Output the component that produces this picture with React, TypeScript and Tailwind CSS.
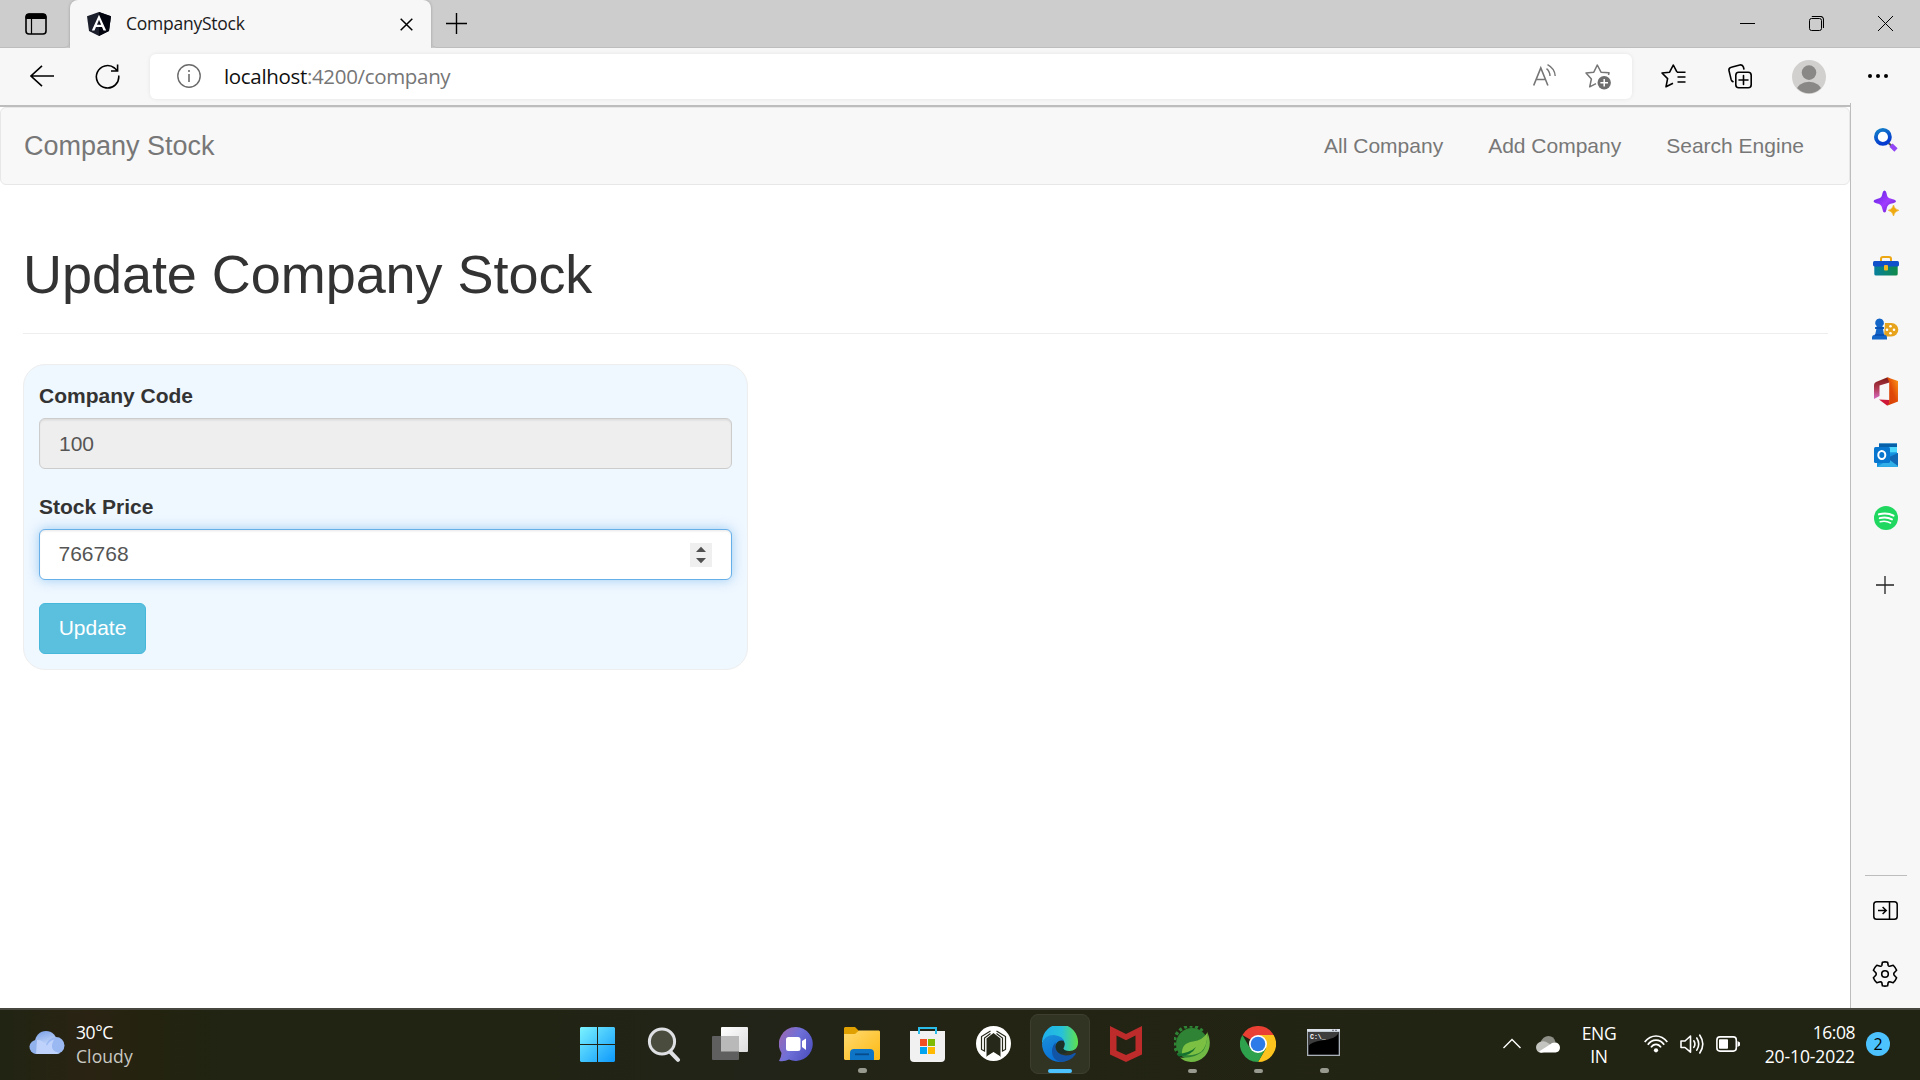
import type { ReactNode } from "react";

const SEGOE = "font-['Open_Sans','Noto_Sans',sans-serif]";

function AngularIcon() {
  return (
    <svg width="24" height="24" viewBox="0 0 24 24">
      <path d="M12 0L24 4.2L22 19L12 24L2 19L0 4.2Z" fill="#1b1f2b" />
      <path d="M12 0L24 4.2L22 19L12 24Z" fill="#04060f" />
      <path d="M12 2.8L4.8 18.6H7.5L9 15H15L16.5 18.6H19.2ZM12 7.8L14.1 12.8H9.9Z" fill="#fff" fillRule="evenodd" />
    </svg>
  );
}

function TabStrip() {
  return (
    <div className="flex h-12 shrink-0 items-end bg-[#cdcdcd]">
      <div className="flex h-12 w-[70px] items-center rounded-br-md border-b border-[#bdbdbd] pl-[25px]">
        <svg width="22" height="22" viewBox="0 0 22 22" fill="none" stroke="#000">
          <rect x="1" y="1" width="20" height="20" rx="3" strokeWidth="1.6" />
          <path d="M1 5.5V4a3 3 0 0 1 3-3h14a3 3 0 0 1 3 3v1.5Z" fill="#000" />
          <path d="M6.5 5V21" strokeWidth="1.2" />
        </svg>
      </div>
      <div className="flex h-12 w-[361px] items-center rounded-t-lg bg-[#f7f7f7] pr-[18px] pl-[17px] shadow-[0_0_3px_rgba(0,0,0,0.25)]">
        <AngularIcon />
        <span className={`mb-0.5 ml-[15px] text-[17.5px] leading-6 tracking-[-0.25px] text-[#1b1b1b] ${SEGOE}`}>CompanyStock</span>
        <svg className="ml-auto" width="13" height="13" viewBox="0 0 13 13" stroke="#000" strokeWidth="1.5">
          <path d="M0.7 0.7L12.3 12.3M12.3 0.7L0.7 12.3" />
        </svg>
      </div>
      <div className="flex h-12 grow items-center rounded-bl-md border-b border-[#bdbdbd] pl-[15px]">
        <svg width="21" height="21" viewBox="0 0 21 21" stroke="#000" strokeWidth="1.4">
          <path d="M10.5 0V21M0 10.5H21" />
        </svg>
        <div className="ml-auto flex">
          <div className="flex w-[69px] items-center justify-center">
            <svg width="15" height="15" viewBox="0 0 15 15"><path d="M0 7.5H15" stroke="#000" /></svg>
          </div>
          <div className="flex w-[69px] items-center justify-center">
            <svg width="15" height="15" viewBox="0 0 15 15" fill="none" stroke="#000">
              <rect x="0.5" y="2.5" width="12" height="12" rx="2" />
              <path d="M2.8 0.5H11.5a3 3 0 0 1 3 3V12" strokeWidth="1.1" />
            </svg>
          </div>
          <div className="flex w-[69px] items-center justify-center">
            <svg width="15" height="15" viewBox="0 0 15 15" stroke="#000" strokeWidth="1"><path d="M0 0L15 15M15 0L0 15" /></svg>
          </div>
        </div>
      </div>
    </div>
  );
}

function Toolbar() {
  return (
    <div className="flex h-[57px] shrink-0 items-center bg-[#f7f7f7] pl-[9px]">
      <div className="flex w-[66px] justify-center pb-0.5">
        <svg width="24" height="22" viewBox="0 0 24 22" fill="none" stroke="#000" strokeWidth="1.6">
          <path d="M24 11H1M12 0.8L1 11L12 21.2" />
        </svg>
      </div>
      <div className="flex w-[66px] justify-center pr-px pb-px">
        <svg width="25" height="25" viewBox="0 0 25 25" fill="none" stroke="#000" strokeWidth="1.6">
          <path d="M23.7 11.5A11.2 11.2 0 1 1 19.5 4L22.3 6.6M22.6 0.5V7H16" />
        </svg>
      </div>
      <div className="ml-[9px] flex h-[45px] w-[1482px] items-center rounded-md bg-white pb-px pl-[27px] shadow-[0_0_4px_rgba(0,0,0,0.08)]">
        <svg width="24" height="24" viewBox="0 0 24 24" fill="none" stroke="#6b6b6b" strokeWidth="1.4">
          <circle cx="12" cy="12" r="11.2" />
          <path d="M12 10V18M12 6V8" strokeWidth="1.6" />
        </svg>
        <span className={`mb-px ml-[23px] text-[20.5px] leading-7 tracking-[-0.33px] text-[#767676] ${SEGOE}`}>
          <span className="text-[#101010]">localhost</span>:4200/company
        </span>
        <svg className="-mt-0.5 mr-[29px] ml-auto" width="23" height="22" viewBox="0 0 23 22" fill="none" stroke="#767676" strokeWidth="1.6">
          <path d="M0.7 21.5L7.8 4L14.9 21.5M3.2 15.5H12.4" />
          <path d="M13.5 4.6Q16.8 7.3 17 12M14.5 0.6Q21.8 4.5 22.2 12" strokeWidth="1.4" />
        </svg>
        <svg className="mt-px mr-[21px]" width="26" height="26" viewBox="0 0 26 26" fill="none">
          <path d="M23.5 11L24 8.8L16 8.2L12.3 1L8.8 8.2L1 9L6.4 15L4.7 22.8L11 19.6" stroke="#767676" strokeWidth="1.5" strokeLinejoin="round" />
          <circle cx="19.2" cy="18.8" r="6.7" fill="#6e6e6e" />
          <path d="M19.2 15V22.6M15.4 18.8H23" stroke="#fff" strokeWidth="1.5" />
        </svg>
      </div>
      <div className="ml-[9px] flex w-[66px] justify-center pr-px pb-px">
        <svg width="25" height="24" viewBox="0 0 25 24" fill="none" stroke="#000" strokeWidth="1.6" strokeLinejoin="round">
          <path d="M16 8.2L12.3 1L8.6 8.2L1 9L6.6 14.6L5 22.8L12 19.2M12.3 1L16 8.2M16 8.2H24.5M16.5 13H24.5M16.5 18H24.5" />
        </svg>
      </div>
      <div className="flex w-[66px] justify-center">
        <svg width="24" height="25" viewBox="0 0 24 25" fill="none" stroke="#000" strokeWidth="1.6" strokeLinecap="round">
          <rect x="7.8" y="8.3" width="15.4" height="15.4" rx="3" />
          <path d="M15.5 11.5V20.5M11 16H20M5 17.7Q3.6 17 3.1 15.4L1 6.6Q0.5 3.8 3.3 3.2L11.8 1Q14.6 0.5 15.4 3L15.9 5" />
        </svg>
      </div>
      <div className="flex w-[72px] justify-center">
        <svg width="34" height="34" viewBox="0 0 34 34">
          <defs><clipPath id="avatar"><circle cx="17" cy="17" r="16.2" /></clipPath></defs>
          <circle cx="17" cy="17" r="17" fill="#d2d0ce" />
          <g clipPath="url(#avatar)" fill="#8a8886">
            <circle cx="17" cy="12.6" r="7.3" />
            <ellipse cx="17" cy="31" rx="12.5" ry="9.3" />
          </g>
        </svg>
      </div>
      <div className="flex w-[66px] justify-center pb-px">
        <svg width="20" height="4" viewBox="0 0 20 4"><circle cx="2" cy="2" r="2" /><circle cx="10" cy="2" r="2" /><circle cx="18" cy="2" r="2" /></svg>
      </div>
    </div>
  );
}

function Page() {
  return (
    <main className="grow bg-white font-['Liberation_Sans',Arial,sans-serif] text-[21px] leading-[30px] text-[#333]">
      <nav className="flex h-[78px] items-center rounded-md border border-[#e7e7e7] bg-[#f8f8f8] pr-[45px] pl-[23px] text-[#777]">
        <span className="text-[27px]">Company Stock</span>
        <div className="ml-auto flex gap-[45px]">
          <span>All Company</span>
          <span>Add Company</span>
          <span>Search Engine</span>
        </div>
      </nav>
      <div className="pr-[22px] pl-[23px]">
        <h1 className="mt-[59px] h-[90px] border-b border-[#eee] text-[54px] leading-[60px] font-medium tracking-[-0.05px]">Update Company Stock</h1>
        <form className="mt-[30px] h-[306px] w-[725px] rounded-[22px] border border-[#eee] bg-[#eff7ff] px-[15px] pt-4">
          <label className="block font-bold">Company Code</label>
          <div className="mt-[7px] flex h-[51px] items-center rounded-md border border-[#ccc] bg-[#eee] px-[19px] text-[#555] shadow-[inset_0_1.5px_1.5px_rgba(0,0,0,0.075)]">100</div>
          <label className="mt-[23px] block font-bold">Stock Price</label>
          <div className="mt-[7px] flex h-[51px] items-center justify-between rounded-md border border-[#66afe9] bg-white pr-[19px] pl-[18.5px] text-[#555] shadow-[inset_0_1.5px_1.5px_rgba(0,0,0,0.075),0_0_12px_rgba(102,175,233,0.6)]">
            <span className="mb-px">766768</span>
            <svg width="22" height="24" viewBox="0 0 22 24">
              <path d="M0 0H22V24H0Z" fill="#efefef" />
              <path d="M6 9L11 3.8L16 9ZM6 15L11 20.2L16 15Z" fill="#505050" />
            </svg>
          </div>
          <button type="button" className="mt-[23px] block h-[51px] w-[107px] rounded-md border border-[#46b8da] bg-[#5bc0de] pb-0.5 text-white">Update</button>
        </form>
      </div>
    </main>
  );
}

function SideCell({ children }: { children: ReactNode }) {
  return <div className="flex h-[63px] items-center justify-center">{children}</div>;
}

function Sidebar() {
  return (
    <aside className="-mt-0.5 flex w-[70px] shrink-0 flex-col border-l border-[#bdbdbd] bg-[#f7f7f7] pt-[5px]">
      <SideCell>
        <svg width="24" height="24" viewBox="0 0 24 24" fill="none">
          <defs><linearGradient id="lens" x2="0.4" y2="1"><stop stopColor="#1380c8" /><stop offset="1" stopColor="#053bd0" /></linearGradient></defs>
          <path d="M14.5 15L17.5 17.8" stroke="#555" strokeWidth="2" />
          <path d="M17 17.2L22 22" stroke="#9246f5" strokeWidth="4.6" />
          <circle cx="8.9" cy="8.9" r="7" fill="#fff" stroke="url(#lens)" strokeWidth="3.8" />
        </svg>
      </SideCell>
      <SideCell>
        <svg width="26" height="26" viewBox="0 0 26 26">
          <defs><linearGradient id="spark" x2="1" y2="1"><stop stopColor="#5a20e0" /><stop offset="0.55" stopColor="#a03cff" /><stop offset="1" stopColor="#6322c8" /></linearGradient></defs>
          <path d="M11.5 0.5Q13 0.5 13.5 3C14.2 7 15 8 19 9Q23 10 23 11.3Q23 12.5 19 13.4C15 14.3 14.3 15.5 13.5 19.5Q13 22.5 11.5 22.5Q10 22.5 9.5 19.5C8.7 15.5 8 14.3 4 13.4Q0.5 12.5 0.5 11.3Q0.5 10 4 9C8 8 8.8 7 9.5 3Q10 0.5 11.5 0.5Z" fill="url(#spark)" />
          <path d="M20.5 15Q21.3 19.5 25.8 20.3Q21.3 21.3 20.5 26Q19.6 21.3 15.3 20.3Q19.6 19.5 20.5 15Z" fill="#efaa10" stroke="#efaa10" strokeWidth="0.6" />
        </svg>
      </SideCell>
      <SideCell>
        <svg width="26" height="20" viewBox="0 0 26 20">
          <defs><linearGradient id="toolbox"><stop stopColor="#087f9e" /><stop offset="1" stopColor="#0f8a48" /></linearGradient></defs>
          <path d="M8 6V3a2 2 0 0 1 2-2h6a2 2 0 0 1 2 2v3" fill="none" stroke="#eda712" strokeWidth="2" />
          <path d="M1.3 9H24.7V18Q24.7 19.5 23 19.5H3Q1.3 19.5 1.3 18Z" fill="url(#toolbox)" />
          <path d="M1.5 5H24.5Q26 5 26 6.5V9Q26 10.4 24.5 10.4H1.5Q0 10.4 0 9V6.5Q0 5 1.5 5Z" fill="#1150cb" />
          <rect x="11" y="9" width="4" height="5.4" rx="1" fill="#f4b721" />
        </svg>
      </SideCell>
      <SideCell>
        <svg className="mr-px" width="28" height="22" viewBox="0 0 28 22">
          <path d="M14 5H20.5A6.8 6.8 0 0 1 20.5 18.6H13Z" fill="#e8a31c" />
          <g fill="#fff"><circle cx="19.5" cy="8.3" r="1.3" /><circle cx="16" cy="11.8" r="1.3" /><circle cx="23" cy="11.8" r="1.3" /><circle cx="19.5" cy="15.3" r="1.3" /></g>
          <path d="M8.5 0.5A4.3 4.3 0 0 1 11.5 8V9H13V11H12L13 16.5Q16 17 16 19.5V21.5H1V19.5Q1 17 4.2 16.5L5.4 11H4V9H5.6V8A4.3 4.3 0 0 1 8.5 0.5Z" fill="#1365c8" />
          <path d="M5.2 10H12M4 17H13" stroke="#073e9f" strokeWidth="1" />
        </svg>
      </SideCell>
      <SideCell>
        <svg width="24" height="29" viewBox="0 0 24 29">
          <defs>
            <linearGradient id="officeLeft" x2="0" y2="1"><stop stopColor="#7e1a16" /><stop offset="0.5" stopColor="#b13b51" /><stop offset="1" stopColor="#d66ac5" /></linearGradient>
            <linearGradient id="officeRight" x1="1" x2="0" y2="1"><stop stopColor="#ff9a18" /><stop offset="0.5" stopColor="#e04a08" /><stop offset="1" stopColor="#d33c05" /></linearGradient>
          </defs>
          <path d="M13 0.5L2 5Q0 6 0 8V22L5.5 19V8.5L15.5 5.5V1Z" fill="url(#officeLeft)" />
          <path d="M5 22.5L13 28.5L15.5 27V23Z" fill="#cf1838" />
          <path d="M13 0.3L24 4V24.5L13 28.7L15.2 26V5Z" fill="url(#officeRight)" />
        </svg>
      </SideCell>
      <SideCell>
        <svg width="24" height="24" viewBox="0 0 24 24">
          <path d="M5 0.5H23V13H5Z" fill="#29a8e9" /><path d="M5 0.5H23V4H5Z" fill="#0860a9" /><path d="M14 4H23V9H14Z" fill="#50d9ff" />
          <path d="M3 11L24 10V24H3Z" fill="#1490df" /><path d="M3 23.8L24 11V24Z" fill="#32afe8" /><path d="M13 15L24 23V10Z" fill="#1268b5" />
          <rect x="0" y="4" width="16" height="16" rx="1.5" fill="#0875cf" />
          <ellipse cx="7.8" cy="12" rx="3.5" ry="4" fill="none" stroke="#fff" strokeWidth="2" />
        </svg>
      </SideCell>
      <SideCell>
        <svg width="24" height="24" viewBox="0 0 24 24" fill="none" stroke="#fff" strokeLinecap="round">
          <circle cx="12" cy="12" r="12" fill="#20d760" stroke="none" />
          <path d="M5 8.3Q13 6.2 19.5 9.6" strokeWidth="2.2" /><path d="M5.7 12.2Q12.5 10.5 18 13.4" strokeWidth="1.9" /><path d="M6.2 15.8Q12 14.5 16.6 17" strokeWidth="1.5" />
        </svg>
      </SideCell>
      <div className="mt-1 flex h-[63px] items-center justify-center pr-0.5">
        <svg width="18" height="18" viewBox="0 0 18 18" stroke="#222" strokeWidth="1.3"><path d="M9 0V18M0 9H18" /></svg>
      </div>
      <div className="mt-auto mb-[3px] ml-3.5 h-px w-[42px] bg-[#bdbdbd]" />
      <SideCell>
        <svg width="25" height="19" viewBox="0 0 25 19" fill="none" stroke="#000" strokeWidth="1.5">
          <rect x="0.8" y="0.8" width="23.4" height="17.4" rx="2.8" />
          <path d="M16.5 1V18M5 9.5H13M9.6 6L13.2 9.5L9.6 13" />
        </svg>
      </SideCell>
      <div className="mb-[3px] flex h-[63px] items-center justify-center pr-px">
        <svg width="26" height="26" viewBox="0 0 26 26" fill="none" stroke="#000" strokeWidth="1.6" strokeLinejoin="round">
          <circle cx="13" cy="13" r="3.3" />
          <path d="M10.4 1.2Q13 0.6 15.6 1.2L16.2 4.5Q16.5 5.2 17.7 5.2L21.2 4.2Q23.6 6.6 24.6 9.3L22.2 11.7Q21.4 13 22.2 14.3L24.6 16.7Q23.6 19.4 21.2 21.8L17.7 20.8Q16.5 20.8 16.2 21.5L15.6 24.8Q13 25.4 10.4 24.8L9.8 21.5Q9.5 20.8 8.3 20.8L4.8 21.8Q2.4 19.4 1.4 16.7L3.8 14.3Q4.6 13 3.8 11.7L1.4 9.3Q2.4 6.6 4.8 4.2L8.3 5.2Q9.5 5.2 9.8 4.5Z" />
        </svg>
      </div>
    </aside>
  );
}

function TaskCell({ children, dot, active }: { children: ReactNode; dot?: boolean; active?: boolean }) {
  return (
    <div className="flex w-[66px] justify-center">
      <div className={`flex h-[60px] w-[60px] flex-col items-center rounded-lg border pt-[11px] ${active ? "border-[#3d3e2f] bg-[#313323]" : "border-transparent"}`}>
        <div className="flex h-9 items-center">{children}</div>
        {active && <div className="mt-[7px] h-[5px] w-6 rounded-full bg-[#4cc2ff]" />}
        {dot && <div className="mt-[7px] h-[5px] w-[9px] rounded-full bg-[#98998f]" />}
      </div>
    </div>
  );
}

function TaskIcons() {
  return (
    <div className="flex pt-1">
      <TaskCell>
        <svg className="mr-px" width="35" height="35" viewBox="0 0 35 35">
          <defs><linearGradient id="win" gradientUnits="userSpaceOnUse" x1="0" y1="0" x2="35" y2="35"><stop stopColor="#7bf3ff" /><stop offset="1" stopColor="#0d98fb" /></linearGradient></defs>
          <path d="M1 0H17V17H0V1ZM18 0H34L35 1V17H18ZM0 18H17V35H1L0 34ZM18 18H35V34L34 35H18Z" fill="url(#win)" />
        </svg>
      </TaskCell>
      <TaskCell>
        <svg width="34" height="35" viewBox="0 0 34 35" fill="none" stroke="#dfe0e4">
          <path d="M22.5 24L31 32.8" strokeWidth="4" strokeLinecap="round" /><circle cx="15" cy="14.5" r="12.6" fill="#4a4d3d" strokeWidth="3" />
        </svg>
      </TaskCell>
      <TaskCell>
        <svg width="36" height="34" viewBox="0 0 36 34">
          <defs><linearGradient id="tv" x2="1" y2="1"><stop stopColor="#fff" /><stop offset="1" stopColor="#dcdcdc" /></linearGradient></defs>
          <rect x="9" y="0" width="27" height="25" rx="1" fill="url(#tv)" /><rect x="0" y="9" width="27" height="24" rx="1" fill="#5f5f5f" /><path d="M9 9H27V24.5H9Z" fill="#b9b9b9" />
        </svg>
      </TaskCell>
      <TaskCell>
        <svg width="34" height="35" viewBox="0 0 34 35">
          <defs><linearGradient id="chat" x1="0" y1="0.2" x2="0.9" y2="0.7"><stop stopColor="#9a68b3" /><stop offset="0.5" stopColor="#6f70d8" /><stop offset="1" stopColor="#5355c3" /></linearGradient></defs>
          <path d="M17 0A17 17 0 1 1 10 32.6Q5 35 0 34Q2.3 30 2.5 26A17 17 0 0 1 17 0Z" fill="url(#chat)" />
          <rect x="7" y="10" width="14.5" height="14" rx="2.5" fill="#fff" /><path d="M23 14L27 11.5V23L23 20Z" fill="#fff" />
        </svg>
      </TaskCell>
      <TaskCell dot>
        <svg width="36" height="33" viewBox="0 0 36 33">
          <defs><linearGradient id="fold" x2="1" y2="1"><stop stopColor="#ffda70" /><stop offset="1" stopColor="#fdb913" /></linearGradient></defs>
          <path d="M1 0H11L15 4V9H0V1Z" fill="#e0a000" /><path d="M0 7H11L15 3.5H35L36 4.5V32L35 33H1L0 32Z" fill="url(#fold)" />
          <path d="M6 33V26Q6 22 10 22H26Q30 22 30 26V33Z" fill="#0d74c6" /><path d="M11 27.3H25" stroke="#084b8a" strokeWidth="1.8" />
        </svg>
      </TaskCell>
      <TaskCell>
        <svg className="mr-px" width="35" height="35" viewBox="0 0 35 35">
          <path d="M0 4H35V31Q35 35 31 35H4Q0 35 0 31Z" fill="#f1f1f1" /><path d="M9 7V1H26V7" fill="none" stroke="#2bbde9" strokeWidth="2" />
          <path d="M10 12H17V19H10Z" fill="#f25022" /><path d="M18 12H25V19H18Z" fill="#7fba00" /><path d="M10 20H17V27H10Z" fill="#00a4ef" /><path d="M18 20H25V27H18Z" fill="#ffb900" />
        </svg>
      </TaskCell>
      <TaskCell>
        <svg className="mr-px -mt-px" width="35" height="35" viewBox="0 0 35 35" fill="none" stroke="#26281a" strokeWidth="1.5">
          <circle cx="17.5" cy="17.5" r="17.5" fill="#fff" stroke="none" />
          <path d="M10.5 12.5L17.5 7L24.5 12.5V31L17.5 26.5L10.5 31Z" fill="#26281a" stroke="none" />
          <path d="M10.5 30.5L17.5 26L24.5 30.5L17.5 34.5Z" fill="#fff" stroke="none" />
          <path d="M14.5 5L5.5 10.5V23.5L8.5 25V12L14.5 7.5M20.5 5L29.5 10.5V23.5L26.5 25V12L20.5 7.5" strokeWidth="1.2" />
        </svg>
      </TaskCell>
      <TaskCell active>
        <svg width="36" height="36" viewBox="0 0 36 36">
          <defs>
            <linearGradient id="edgeTop"><stop stopColor="#1daeed" /><stop offset="0.55" stopColor="#27c1da" /><stop offset="1" stopColor="#5fe04c" /></linearGradient>
            <linearGradient id="edgeLeft" x2="0.4" y2="1"><stop stopColor="#1a8fd8" /><stop offset="1" stopColor="#0870d8" /></linearGradient>
          </defs>
          <path d="M0 15.5A18 18 0 0 1 36 17C36 22 32 25 27.5 25Q22 25 21.2 22.5Q23 20.5 22.5 17Q20 10.5 12 10Q3 10 0 18Z" fill="url(#edgeTop)" />
          <path d="M0 18Q2 9 12 9Q21.5 10 22.7 17L21 15Q14 15 13 21Q13 31 26 34Q22 36 17.5 36A18 18 0 0 1 0 18Z" fill="url(#edgeLeft)" />
          <path d="M13.8 16.5Q11.5 28 24 29.5Q29 29.5 33 26.7Q34.5 27 33.5 28.5Q28 36 18 36Q10 33.5 10 25.5Q10 19.5 13.8 16.5Z" fill="#1254a6" />
          <path d="M13.8 19Q16 13.5 21.5 14.8Q23.6 18.5 21 21.8Q21.4 24.5 26 25.2Q22 29.5 17 26.8Q13.4 24 13.8 19Z" fill="#1d3027" />
        </svg>
      </TaskCell>
      <TaskCell>
        <svg width="32" height="36" viewBox="0 0 32 36"><path d="M0 0L16 8L32 0V28.5L16 36L0 28.5ZM6.5 9.5V24.7L16 29L25.5 24.7V9.5L16 14.3Z" fill="#bd2b2b" fillRule="evenodd" /></svg>
      </TaskCell>
      <TaskCell dot>
        <svg width="36" height="36" viewBox="0 0 36 36">
          <circle cx="18" cy="18" r="16" fill="#2e8335" />
          <path d="M6 29A16.4 16.4 0 1 1 30 7" fill="none" stroke="#2e8335" strokeWidth="3.4" strokeDasharray="3 2.5" />
          <path d="M33 5.5C37 14 37 23 31 30Q25 36 17 36Q10 35.5 6 31.5Q20 33 29 25Q34 18 33 5.5Z" fill="#70b944" />
          <path d="M33 7Q29 14 19 15.5Q7 17 8 28.5Q19 31 27.5 25.5Q34 19 33 7Z" fill="#7cc043" />
          <path d="M3 28Q16 27 22 21Q18 29.5 5 30.5Z" fill="#14702f" />
        </svg>
      </TaskCell>
      <TaskCell dot>
        <svg width="36" height="36" viewBox="0 0 36 36">
          <path d="M18 18L2.4 9A18 18 0 0 1 33.6 9Z" fill="#ea4033" />
          <path d="M18 18V9H33.6A18 18 0 0 1 18 36L25.8 22.5Z" fill="#fcc31e" />
          <path d="M18 18L25.8 22.5L18 36A18 18 0 0 1 2.4 9L10.2 22.5Z" fill="#2da14c" />
          <circle cx="18" cy="18" r="9" fill="#fff" /><circle cx="18" cy="18" r="7.3" fill="#2c7be9" />
        </svg>
      </TaskCell>
      <TaskCell dot>
        <svg className="-mt-0.5 mr-0.5" width="33" height="27" viewBox="0 0 33 27">
          <path d="M0 0H33V27H0Z" fill="#a9b0b8" /><path d="M0 0H33V2.6H0Z" fill="#dce3ea" /><path d="M1.3 3H31.7V25.7H1.3Z" fill="#000" />
          <path d="M1.3 3H31.7Q30 10 14 11.5Q4 13 1.3 17Z" fill="#3d3d3d" />
          <path d="M25 1.3H27M28 1.3H30" stroke="#667" />
          <text x="3" y="10" fill="#fff" fontFamily="Liberation Mono, monospace" fontSize="6.5" fontWeight="bold">C:\_</text>
        </svg>
      </TaskCell>
    </div>
  );
}

function Taskbar() {
  return (
    <footer className={`flex h-[72px] shrink-0 border-t-2 border-[#474740] bg-[linear-gradient(90deg,#212413_0px,#2a2313_90px,#23230f_150px,#212413_230px,#212413_540px,#222419_760px,#232413_1000px,#212413_100%)] text-[17.5px] leading-6 text-white ${SEGOE}`}>
      <div className="flex w-[565px] items-start pl-[29px]">
        <svg className="mt-[21px]" width="36" height="23" viewBox="0 0 36 23">
          <defs><linearGradient id="cloud" x2="0.3" y2="1"><stop stopColor="#79a0e9" /><stop offset="1" stopColor="#dce9ff" /></linearGradient></defs>
          <circle cx="17" cy="11" r="11" fill="url(#cloud)" />
          <path d="M27 6A8.5 8.5 0 0 1 27 23H14Q17 7 27 6Z" fill="#9ab8f2" />
          <path d="M8 9Q14 9 18 14.5Q20 10 25 8.5Q19 20 31 22Q29 23 27 23H7.5A7.2 7.2 0 0 1 8 9Z" fill="#bed2fb" />
          <path d="M7 23A7 7 0 0 1 8 9" fill="#92b2ed" />
        </svg>
        <div className="mt-[10px] ml-[11px]">
          <div className="tracking-[-0.4px]">30°C</div>
          <div className="tracking-[0.1px] text-[#c9c9c3]">Cloudy</div>
        </div>
      </div>
      <TaskIcons />
      <div className="ml-auto flex items-start pr-[30px]">
        <svg className="mt-7" width="18" height="11" viewBox="0 0 18 11" fill="none" stroke="#fff" strokeWidth="1.4"><path d="M0.5 10L9 1.5L17.5 10" /></svg>
        <svg className="mt-[26px] ml-[15px]" width="24" height="17" viewBox="0 0 24 17">
          <path d="M4 7Q7 0 12.5 0Q18 0 19.5 6L12 12Z" fill="#8e8f87" /><path d="M5.5 5.5Q9 4.5 12 7L20 12L5 17Q0 16 0 11Q0.5 6.5 5.5 5.5Z" fill="#c3c4bf" />
          <path d="M3 15.5L14 8.5Q16 6 20 6.5Q24 7.5 24 12Q23.5 16 19.5 16.5H5Z" fill="#fff" />
        </svg>
        <div className="mt-3 ml-[16px] w-[46px] text-center leading-[22.5px] tracking-[-0.4px]"><div>ENG</div><div>IN</div></div>
        <svg className="mt-[25px] ml-[22px]" width="24" height="18" viewBox="0 0 24 18" fill="none" stroke="#fff" strokeWidth="1.7">
          <path d="M0.7 7Q5.5 1 12 1Q18.5 1 23.3 7M3.8 9.8Q7 5.2 12 5.2Q17 5.2 20.2 9.8M7 12.4Q9 9.3 12 9.3Q15 9.3 17 12.4" /><circle cx="12" cy="15.3" r="2.1" fill="#fff" stroke="none" />
        </svg>
        <svg className="mt-6 ml-3" width="24" height="20" viewBox="0 0 24 20" fill="none" stroke="#fff" strokeWidth="1.6" strokeLinecap="round">
          <path d="M1 7H5L10.5 2V18.2L5 13.5H1Z" strokeLinejoin="round" /><path d="M13.8 6.8Q16 10 13.8 13.4M16.8 4Q20.6 10 16.8 16.2M19.8 1.2Q25.8 10 19.8 19" />
        </svg>
        <svg className="mt-[26px] ml-3" width="24" height="16" viewBox="0 0 24 16" fill="none"><rect x="0.9" y="0.9" width="19.4" height="14.2" rx="3" stroke="#fff" strokeWidth="1.6" /><rect x="3" y="3.3" width="9" height="9.4" rx="0.8" fill="#fff" /><path d="M21.5 5L24 6.5V9.5L21.5 11Z" fill="#fff" /></svg>
        <div className="mt-[10px] ml-[15px] w-[100px] text-right"><div className="tracking-[-0.45px]">16:08</div><div className="tracking-[-0.1px] whitespace-nowrap">20-10-2022</div></div>
        <div className="mt-[22px] ml-[11px] flex h-6 w-6 items-center justify-center rounded-full bg-[#4cc2ff] pb-px text-[16px] text-black">2</div>
      </div>
    </footer>
  );
}

export default function App() {
  return (
    <div className="flex h-[1080px] w-[1920px] flex-col overflow-hidden bg-[#f7f7f7]">
      <TabStrip />
      <Toolbar />
      <div className="flex h-[903px] shrink-0">
        <div className="flex w-[1850px] border-t-2 border-[#bdbdbd]"><Page /></div>
        <Sidebar />
      </div>
      <Taskbar />
    </div>
  );
}
